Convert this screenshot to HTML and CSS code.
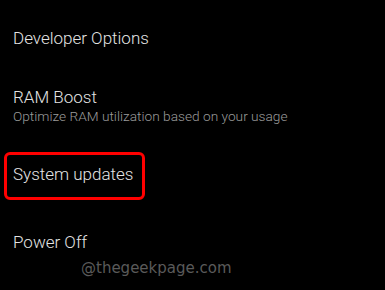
FILE: index.html
```html
<!DOCTYPE html>
<html lang="en">
<head>
  <meta charset="UTF-8" />
  <meta name="viewport" content="width=device-width, initial-scale=1.0"/>
  <title>Settings</title>
  <link rel="stylesheet" href="styles.css">
</head>
<body>

  <section class="settings">
    <div class="item item-dev">
      <div class="title">Developer Options</div>
    </div>
    <div class="item item-ram">
      <div class="title">RAM Boost</div>
      <div class="summary">Optimize RAM utilization based on your usage</div>
    </div>
    <div class="item item-update">
      <div class="highlight">
        <div class="title">System updates</div>
      </div>
    </div>
    <div class="item item-power">
      <div class="title">Power Off</div>
    </div>
  </section>

  <div class="watermark">@thegeekpage.com</div>

</body>
</html>
```

FILE: styles.css
```css
html, body {
  margin: 0;
  padding: 0;
  background: #000;
  height: 100%;
  overflow: hidden;
}

body {
  font-family: 'Roboto', 'Inter', sans-serif;
  color: #e4e4e4;
}

.settings {
  padding: 0 0 0 13px;
}

.item .title {
  font-size: 17px;
  line-height: 20px;
  font-weight: 300;
}

.item .summary {
  font-size: 13.7px;
  line-height: 18px;
  font-weight: 300;
  color: #9b9b9b;
}

.item-dev { padding-top: 28px; }
.item-ram { padding-top: 39px; }
.item-update { padding-top: 27px; margin-left: -9px; }
.item-power { padding-top: 32px; }

.highlight {
  display: inline-block;
  border: 3px solid #ff0000;
  border-radius: 6px;
  padding: 9px 9px 13px 6px;
}

.watermark {
  margin: 7px 0 0 81px;
  font-family: 'DejaVu Sans', sans-serif;
  font-size: 15px;
  color: #5a5a5a;
}
```
